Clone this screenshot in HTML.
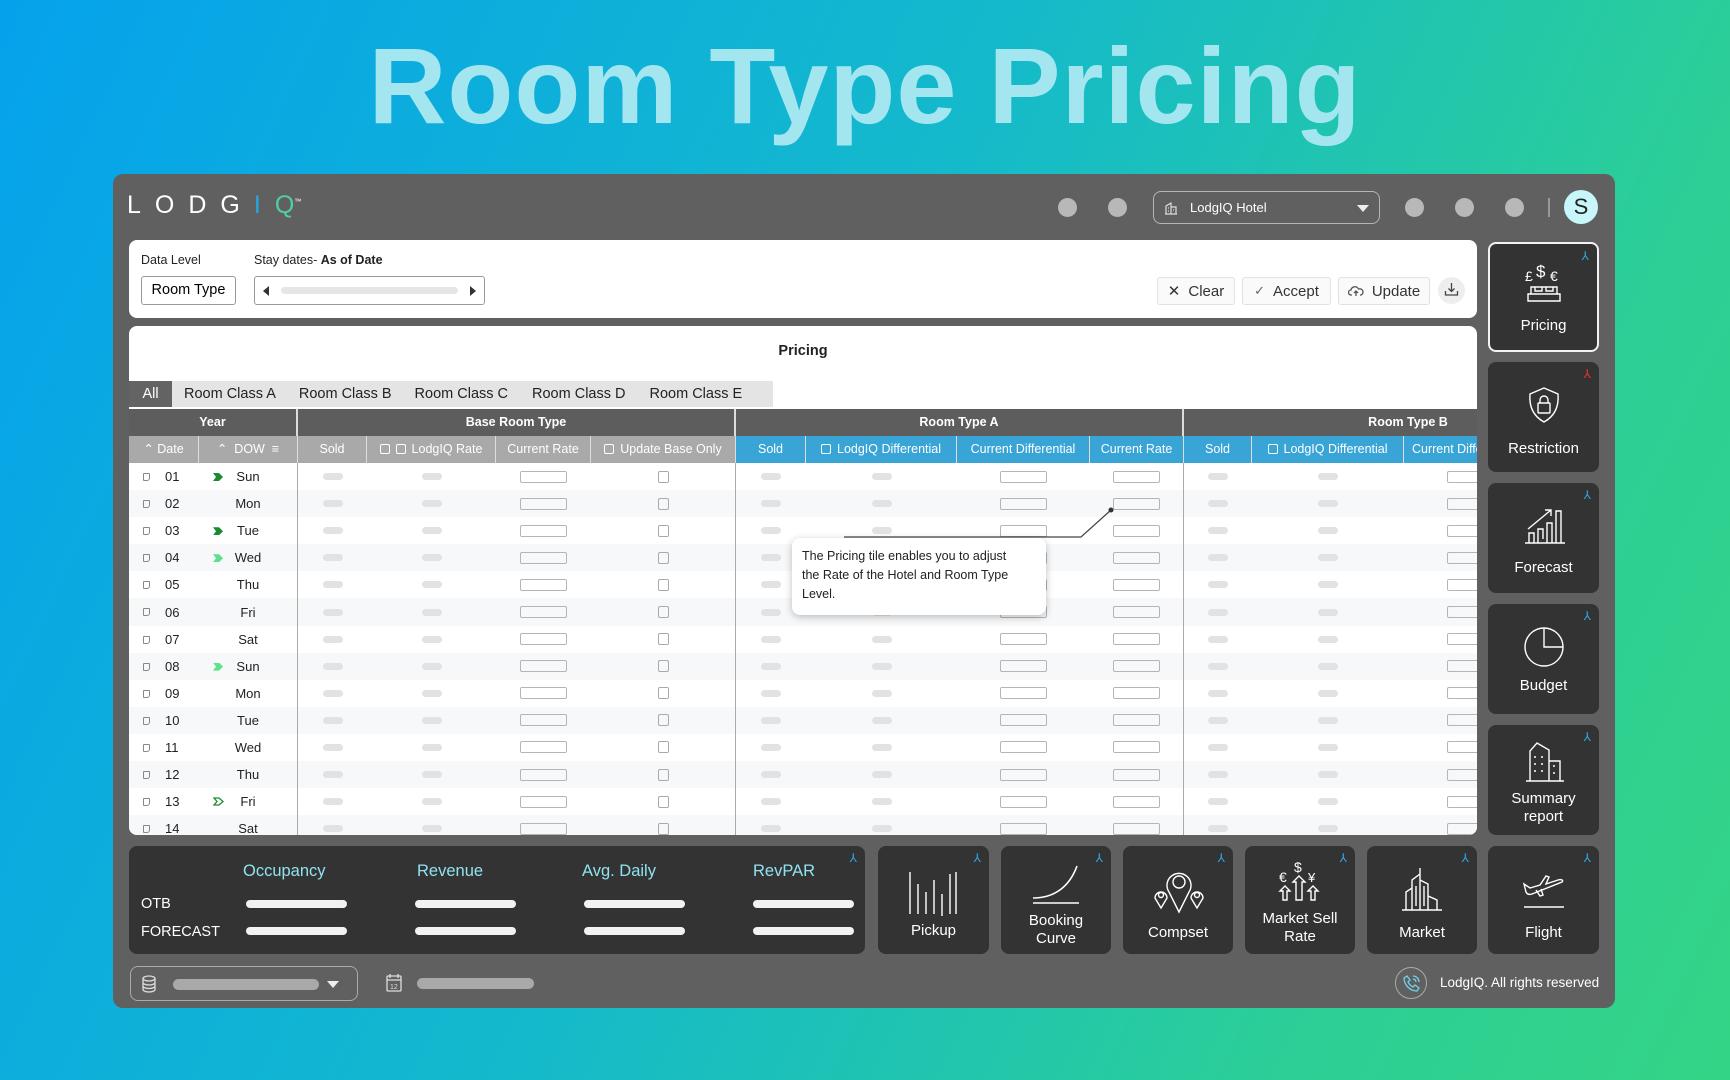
<!DOCTYPE html>
<html><head><meta charset="utf-8"><style>
*{box-sizing:border-box;margin:0;padding:0}
body{width:1730px;height:1080px;overflow:hidden;font-family:"Liberation Sans",sans-serif;background:linear-gradient(115deg,#05a2ec 0%,#14b9cc 45%,#2ccf96 80%,#34d486 100%);position:relative}
.abs{position:absolute}
h1{position:absolute;left:0;width:1730px;top:26px;text-align:center;font-size:108px;font-weight:bold;color:#a3e6f0;letter-spacing:1px;line-height:120px}
.panel{left:113px;top:174px;width:1502px;height:834px;background:#606060;border-radius:10px}
.logo{left:127px;top:191px;color:#fff;font-size:25px;letter-spacing:14px}
.dot{width:19px;height:19px;border-radius:50%;background:#b8b8b8;top:198px}
.card{background:#fff;border-radius:8px}
.lbl{font-size:12.5px;color:#222}
.box{border:1px solid #999;border-radius:3px;background:#fff}
.btn{top:277px;height:28px;border:1px solid #e2e2e2;border-radius:3px;background:#fafafa;font-size:15px;color:#333;display:flex;align-items:center;justify-content:center;gap:8px}
.tile{background:#333;border-radius:8px;color:#fff;font-size:15px;text-align:center}
.tile .t{position:absolute;left:0;right:0;line-height:18px}
.pin{position:absolute;right:8px;top:5px;color:#2fa8e0;font-size:12px}
.tabs{left:129px;top:381px;height:26px;display:flex;font-size:14.5px;color:#222}
.grp{left:129px;top:409px;width:1348px;height:27px;background:#5d5d5d;color:#fff;font-weight:bold;font-size:12.5px;overflow:hidden}
.grp div{position:absolute;top:0;height:27px;line-height:27px;text-align:center;border-right:2px solid #ddd}
.hdr{left:129px;top:436px;width:1348px;height:27px;display:flex;font-size:12.5px;color:#fff;overflow:hidden}
.hdr span{height:27px;line-height:27px;text-align:center;border-right:1.5px solid #ddd;white-space:nowrap;overflow:hidden;flex:none}
.gr{background:#a9a9a9}.bl{background:#38a5d6}
.cb{display:inline-block;width:10px;height:10px;border:1.3px solid #fff;border-radius:2px;vertical-align:-1px;margin-right:6px}
.body{left:129px;top:463px;width:1348px;height:372px;overflow:hidden;border-radius:0 0 8px 8px}
.r{height:27.1px;display:flex;align-items:center;font-size:13px;color:#222}
.r.a{background:#f6f8fa}
.r span{flex:none;height:27.1px;display:flex;align-items:center;justify-content:center;position:relative}
.w1{width:70px}.w2{width:99px}.w3{width:69px}.w4{width:129px}.w5{width:95px}.w6{width:145px}.w7{width:70px}.w8{width:151px}.w9{width:133px}.w10{width:94px}.w11{width:68px}.w12{width:152px}.w13{width:133px}
.r .w1{justify-content:flex-start;padding-left:36px}
.w2,.w6,.w10{border-right:1.5px solid #aaa}
.hdr .w2,.hdr .w6,.hdr .w10{border-right:1.5px solid #ddd}
.di{position:absolute;left:14px;top:10px;width:7px;height:8px;border:1.2px solid #888;border-radius:1px 1px 3px 1px}
.ch{position:absolute;left:14px;top:10px;width:10px;height:8px;clip-path:polygon(0 0,60% 0,100% 50%,60% 100%,0 100%,30% 50%)}
.g1{background:#1a8c2e}.g2{background:#5fe08a}
.p{display:block;width:20px;height:7px;border-radius:4px;background:#e2e2e2}
.x{display:block;width:47px;height:12px;border:1.3px solid #b5b5b5;border-radius:2px}
.k{display:block;width:11px;height:12px;border:1.3px solid #aaa;border-radius:2px}
.kh{color:#8fe3f0;font-size:16.5px;top:862px}
.kb{width:101px;height:8px;border-radius:4px;background:#f2f2f2}
</style></head><body>
<h1>Room Type Pricing</h1>
<div class="abs panel"></div>
<div class="abs logo">LODG<span style="color:#2aa7e0">I</span><span style="color:#4fcfa0;letter-spacing:0">Q</span><sup style="font-size:7px;letter-spacing:0">™</sup></div>
<div class="abs dot" style="left:1058px"></div><div class="abs dot" style="left:1108px"></div>
<div class="abs" style="left:1153px;top:191px;width:227px;height:33px;border:1.3px solid #b5b5b5;border-radius:8px;color:#fff;font-size:13px;line-height:31px;padding-left:36px">LodgIQ Hotel
<svg class="abs" style="left:10px;top:9px" width="14" height="14" viewBox="0 0 14 14" fill="none" stroke="#ddd" stroke-width="1.2"><path d="M2 13V5l5-3v11M7 6h5v7M1 13h12M4 7h1M4 10h1M9 9h1"/></svg>
<div class="abs" style="right:10px;top:13px;width:0;height:0;border-left:6px solid transparent;border-right:6px solid transparent;border-top:7px solid #eee"></div></div>
<div class="abs dot" style="left:1405px"></div><div class="abs dot" style="left:1455px"></div><div class="abs dot" style="left:1505px"></div>
<div class="abs" style="left:1548px;top:198px;width:1.5px;height:19px;background:#999"></div>
<div class="abs" style="left:1564px;top:190px;width:34px;height:34px;border-radius:50%;background:#c7f6fb;color:#222;font-size:22px;text-align:center;line-height:34px">S</div>

<div class="abs card" style="left:129px;top:240px;width:1348px;height:78px"></div>
<div class="abs lbl" style="left:141px;top:253px">Data Level</div>
<div class="abs lbl" style="left:254px;top:253px">Stay dates- <b>As of Date</b></div>
<div class="abs box" style="left:141px;top:276px;width:95px;height:29px;font-size:14.5px;line-height:27px;text-align:center">Room Type</div>
<div class="abs box" style="left:254px;top:276px;width:231px;height:29px">
<div class="abs" style="left:8px;top:9px;border-top:5px solid transparent;border-bottom:5px solid transparent;border-right:6px solid #333"></div>
<div class="abs" style="left:26px;top:10px;width:177px;height:7px;border-radius:4px;background:#e6e6e6"></div>
<div class="abs" style="right:8px;top:9px;border-top:5px solid transparent;border-bottom:5px solid transparent;border-left:6px solid #333"></div></div>
<div class="abs btn" style="left:1157px;width:78px"><span style="font-size:15px">✕</span>Clear</div>
<div class="abs btn" style="left:1242px;width:89px"><span style="font-size:13px;color:#666">✓</span>Accept</div>
<div class="abs btn" style="left:1338px;width:92px"><svg width="16" height="12" viewBox="0 0 16 12" fill="none" stroke="#555" stroke-width="1.3"><path d="M4 10H3a2.5 2.5 0 010-5 4 4 0 017.5-1A3 3 0 0113 10h-1M8 11V6M6 8l2-2 2 2"/></svg>Update</div>
<div class="abs" style="left:1438px;top:277px;width:27px;height:27px;border-radius:50%;background:#eee"><svg class="abs" style="left:6px;top:5px" width="15" height="15" viewBox="0 0 15 15" fill="none" stroke="#444" stroke-width="1.3"><path d="M7.5 1v8M4.5 6.5l3 3 3-3M1.5 9v4h12V9"/></svg></div>

<div class="abs card" style="left:129px;top:326px;width:1348px;height:509px"></div>
<div class="abs" style="left:129px;width:1348px;top:343px;text-align:center;font-weight:bold;font-size:14.5px;color:#222">Pricing</div>
<div class="abs tabs"><div style="background:#636363;color:#fff;width:43px;text-align:center;line-height:26px">All</div><div style="background:#e4e4e4;width:601px;line-height:26px;display:flex;gap:0"><span style="padding:0 12px">Room Class A</span><span style="padding:0 11px">Room Class B</span><span style="padding:0 12px">Room Class C</span><span style="padding:0 12px">Room Class D</span><span style="padding:0 12px">Room Class E</span></div></div>
<div class="abs grp"><div style="left:0;width:169px">Year</div><div style="left:169px;width:438px">Base Room Type</div><div style="left:607px;width:448px">Room Type A</div><div style="left:1055px;width:448px;border:none">Room Type B</div></div>
<div class="abs hdr">
<span class="w1 gr">⌃ Date</span><span class="w2 gr">⌃ &nbsp;DOW &nbsp;≡</span><span class="w3 gr">Sold</span><span class="w4 gr"><i class="cb"></i><i class="cb"></i>LodgIQ Rate</span><span class="w5 gr">Current Rate</span><span class="w6 gr"><i class="cb"></i>Update Base Only</span><span class="w7 bl">Sold</span><span class="w8 bl"><i class="cb"></i>LodgIQ Differential</span><span class="w9 bl">Current Differential</span><span class="w10 bl">Current Rate</span><span class="w11 bl">Sold</span><span class="w12 bl"><i class="cb"></i>LodgIQ Differential</span><span class="w13 bl" style="text-align:left;padding-left:8px">Current Differential</span></div>
<div class="abs body">
<div class="r"><span class="w1"><i class="di"></i>01</span><span class="w2"><i class="ch g1"></i>Sun</span><span class="w3"><b class="p"></b></span><span class="w4"><b class="p"></b></span><span class="w5"><b class="x"></b></span><span class="w6"><b class="k"></b></span><span class="w7"><b class="p"></b></span><span class="w8"><b class="p"></b></span><span class="w9"><b class="x"></b></span><span class="w10"><b class="x"></b></span><span class="w11"><b class="p"></b></span><span class="w12"><b class="p"></b></span><span class="w13"><b class="x"></b></span></div>
<div class="r a"><span class="w1"><i class="di"></i>02</span><span class="w2">Mon</span><span class="w3"><b class="p"></b></span><span class="w4"><b class="p"></b></span><span class="w5"><b class="x"></b></span><span class="w6"><b class="k"></b></span><span class="w7"><b class="p"></b></span><span class="w8"><b class="p"></b></span><span class="w9"><b class="x"></b></span><span class="w10"><b class="x"></b></span><span class="w11"><b class="p"></b></span><span class="w12"><b class="p"></b></span><span class="w13"><b class="x"></b></span></div>
<div class="r"><span class="w1"><i class="di"></i>03</span><span class="w2"><i class="ch g1"></i>Tue</span><span class="w3"><b class="p"></b></span><span class="w4"><b class="p"></b></span><span class="w5"><b class="x"></b></span><span class="w6"><b class="k"></b></span><span class="w7"><b class="p"></b></span><span class="w8"><b class="p"></b></span><span class="w9"><b class="x"></b></span><span class="w10"><b class="x"></b></span><span class="w11"><b class="p"></b></span><span class="w12"><b class="p"></b></span><span class="w13"><b class="x"></b></span></div>
<div class="r a"><span class="w1"><i class="di"></i>04</span><span class="w2"><i class="ch g2"></i>Wed</span><span class="w3"><b class="p"></b></span><span class="w4"><b class="p"></b></span><span class="w5"><b class="x"></b></span><span class="w6"><b class="k"></b></span><span class="w7"><b class="p"></b></span><span class="w8"><b class="p"></b></span><span class="w9"><b class="x"></b></span><span class="w10"><b class="x"></b></span><span class="w11"><b class="p"></b></span><span class="w12"><b class="p"></b></span><span class="w13"><b class="x"></b></span></div>
<div class="r"><span class="w1"><i class="di"></i>05</span><span class="w2">Thu</span><span class="w3"><b class="p"></b></span><span class="w4"><b class="p"></b></span><span class="w5"><b class="x"></b></span><span class="w6"><b class="k"></b></span><span class="w7"><b class="p"></b></span><span class="w8"><b class="p"></b></span><span class="w9"><b class="x"></b></span><span class="w10"><b class="x"></b></span><span class="w11"><b class="p"></b></span><span class="w12"><b class="p"></b></span><span class="w13"><b class="x"></b></span></div>
<div class="r a"><span class="w1"><i class="di"></i>06</span><span class="w2">Fri</span><span class="w3"><b class="p"></b></span><span class="w4"><b class="p"></b></span><span class="w5"><b class="x"></b></span><span class="w6"><b class="k"></b></span><span class="w7"><b class="p"></b></span><span class="w8"><b class="p"></b></span><span class="w9"><b class="x"></b></span><span class="w10"><b class="x"></b></span><span class="w11"><b class="p"></b></span><span class="w12"><b class="p"></b></span><span class="w13"><b class="x"></b></span></div>
<div class="r"><span class="w1"><i class="di"></i>07</span><span class="w2">Sat</span><span class="w3"><b class="p"></b></span><span class="w4"><b class="p"></b></span><span class="w5"><b class="x"></b></span><span class="w6"><b class="k"></b></span><span class="w7"><b class="p"></b></span><span class="w8"><b class="p"></b></span><span class="w9"><b class="x"></b></span><span class="w10"><b class="x"></b></span><span class="w11"><b class="p"></b></span><span class="w12"><b class="p"></b></span><span class="w13"><b class="x"></b></span></div>
<div class="r a"><span class="w1"><i class="di"></i>08</span><span class="w2"><i class="ch g2"></i>Sun</span><span class="w3"><b class="p"></b></span><span class="w4"><b class="p"></b></span><span class="w5"><b class="x"></b></span><span class="w6"><b class="k"></b></span><span class="w7"><b class="p"></b></span><span class="w8"><b class="p"></b></span><span class="w9"><b class="x"></b></span><span class="w10"><b class="x"></b></span><span class="w11"><b class="p"></b></span><span class="w12"><b class="p"></b></span><span class="w13"><b class="x"></b></span></div>
<div class="r"><span class="w1"><i class="di"></i>09</span><span class="w2">Mon</span><span class="w3"><b class="p"></b></span><span class="w4"><b class="p"></b></span><span class="w5"><b class="x"></b></span><span class="w6"><b class="k"></b></span><span class="w7"><b class="p"></b></span><span class="w8"><b class="p"></b></span><span class="w9"><b class="x"></b></span><span class="w10"><b class="x"></b></span><span class="w11"><b class="p"></b></span><span class="w12"><b class="p"></b></span><span class="w13"><b class="x"></b></span></div>
<div class="r a"><span class="w1"><i class="di"></i>10</span><span class="w2">Tue</span><span class="w3"><b class="p"></b></span><span class="w4"><b class="p"></b></span><span class="w5"><b class="x"></b></span><span class="w6"><b class="k"></b></span><span class="w7"><b class="p"></b></span><span class="w8"><b class="p"></b></span><span class="w9"><b class="x"></b></span><span class="w10"><b class="x"></b></span><span class="w11"><b class="p"></b></span><span class="w12"><b class="p"></b></span><span class="w13"><b class="x"></b></span></div>
<div class="r"><span class="w1"><i class="di"></i>11</span><span class="w2">Wed</span><span class="w3"><b class="p"></b></span><span class="w4"><b class="p"></b></span><span class="w5"><b class="x"></b></span><span class="w6"><b class="k"></b></span><span class="w7"><b class="p"></b></span><span class="w8"><b class="p"></b></span><span class="w9"><b class="x"></b></span><span class="w10"><b class="x"></b></span><span class="w11"><b class="p"></b></span><span class="w12"><b class="p"></b></span><span class="w13"><b class="x"></b></span></div>
<div class="r a"><span class="w1"><i class="di"></i>12</span><span class="w2">Thu</span><span class="w3"><b class="p"></b></span><span class="w4"><b class="p"></b></span><span class="w5"><b class="x"></b></span><span class="w6"><b class="k"></b></span><span class="w7"><b class="p"></b></span><span class="w8"><b class="p"></b></span><span class="w9"><b class="x"></b></span><span class="w10"><b class="x"></b></span><span class="w11"><b class="p"></b></span><span class="w12"><b class="p"></b></span><span class="w13"><b class="x"></b></span></div>
<div class="r"><span class="w1"><i class="di"></i>13</span><span class="w2"><svg class="abs" style="left:14px;top:9px" width="11" height="9" viewBox="0 0 11 9" fill="none" stroke="#1a8c2e" stroke-width="1.3"><path d="M1 1h5l4 3.5L6 8H1l3-3.5z"/></svg>Fri</span><span class="w3"><b class="p"></b></span><span class="w4"><b class="p"></b></span><span class="w5"><b class="x"></b></span><span class="w6"><b class="k"></b></span><span class="w7"><b class="p"></b></span><span class="w8"><b class="p"></b></span><span class="w9"><b class="x"></b></span><span class="w10"><b class="x"></b></span><span class="w11"><b class="p"></b></span><span class="w12"><b class="p"></b></span><span class="w13"><b class="x"></b></span></div>
<div class="r a"><span class="w1"><i class="di"></i>14</span><span class="w2">Sat</span><span class="w3"><b class="p"></b></span><span class="w4"><b class="p"></b></span><span class="w5"><b class="x"></b></span><span class="w6"><b class="k"></b></span><span class="w7"><b class="p"></b></span><span class="w8"><b class="p"></b></span><span class="w9"><b class="x"></b></span><span class="w10"><b class="x"></b></span><span class="w11"><b class="p"></b></span><span class="w12"><b class="p"></b></span><span class="w13"><b class="x"></b></span></div>
</div>
<svg class="abs" style="left:0;top:0" width="1730" height="1080" pointer-events="none"><path d="M844 537H1081L1111 510" fill="none" stroke="#444" stroke-width="1.2"/><circle cx="1111" cy="510" r="2.5" fill="#333"/></svg>
<div class="abs" style="left:792px;top:538px;width:254px;height:77px;background:#fff;border-radius:8px;box-shadow:0 2px 8px rgba(0,0,0,.25);font-size:12.5px;line-height:19px;color:#222;padding:9px 10px;white-space:nowrap">The Pricing tile enables you to adjust<br>the Rate of the Hotel and Room Type<br>Level.</div>

<!-- right tiles -->
<div class="abs tile" style="left:1488px;top:242px;width:111px;height:110px;border:2px solid #f2f2f2"><span class="pin">⅄</span>
<svg class="abs" style="left:33px;top:20px" width="42" height="42" viewBox="0 0 42 42" fill="none" stroke="#fff" stroke-width="1.4"><text x="2" y="17" fill="#fff" stroke="none" font-size="14" font-family="Liberation Sans">£</text><text x="13" y="13" fill="#fff" stroke="none" font-size="17" font-family="Liberation Sans">$</text><text x="27" y="17" fill="#fff" stroke="none" font-size="14" font-family="Liberation Sans">€</text><path d="M8 30V23h26v7M5 30h32v7H5zM12 23v4h7v-4M23 23v4h7v-4"/></svg>
<div class="t" style="top:73px">Pricing</div></div>
<div class="abs tile" style="left:1488px;top:362px;width:111px;height:110px"><span class="pin" style="color:#e33">⅄</span>
<svg class="abs" style="left:38px;top:24px" width="36" height="40" viewBox="0 0 36 40" fill="none" stroke="#fff" stroke-width="1.4"><path d="M18 2l14 6c1 12-3 22-14 28C7 30 3 20 4 8z"/><rect x="12" y="17" width="12" height="10" rx="1"/><path d="M14 17v-3a4 4 0 018 0v3"/></svg>
<div class="t" style="top:78px">Restriction</div></div>
<div class="abs tile" style="left:1488px;top:483px;width:111px;height:110px"><span class="pin">⅄</span>
<svg class="abs" style="left:36px;top:22px" width="42" height="40" viewBox="0 0 42 40" fill="none" stroke="#fff" stroke-width="1.4"><path d="M1 38h40M5 38V28h5v10M14 38V24h5v10M23 38V18h5v20M32 38V6h5v32M4 24L27 5M21 5h6v6"/></svg>
<div class="t" style="top:76px">Forecast</div></div>
<div class="abs tile" style="left:1488px;top:604px;width:111px;height:110px"><span class="pin">⅄</span>
<svg class="abs" style="left:35px;top:22px" width="42" height="42" viewBox="0 0 42 42" fill="none" stroke="#fff" stroke-width="1.4"><circle cx="21" cy="21" r="19"/><path d="M21 2v19h19"/></svg>
<div class="t" style="top:73px">Budget</div></div>
<div class="abs tile" style="left:1488px;top:725px;width:111px;height:110px"><span class="pin">⅄</span>
<svg class="abs" style="left:37px;top:16px" width="40" height="42" viewBox="0 0 40 42" fill="none" stroke="#fff" stroke-width="1.4"><path d="M1 40h38M5 40V10l7-8 12 7v31M24 20h11v20M9 16h2M16 16h2M9 23h2M16 23h2M9 30h2M16 30h2M28 25h2M28 32h2"/></svg>
<div class="t" style="top:65px">Summary<br>report</div></div>
<div class="abs tile" style="left:1488px;top:846px;width:111px;height:108px"><span class="pin">⅄</span>
<svg class="abs" style="left:32px;top:24px" width="48" height="40" viewBox="0 0 48 40" fill="none" stroke="#fff" stroke-width="1.4"><path d="M4 14l6 4 10-3 6-9 3 1-3 7 12-4c3-1 6 0 4 2L12 24c-3 1-5 0-6-2zM16 20l4 6 3-1-2-6M4 37h40"/></svg>
<div class="t" style="top:78px">Flight</div></div>

<!-- KPI -->
<div class="abs tile" style="left:129px;top:846px;width:736px;height:108px"><span class="pin">⅄</span></div>
<div class="abs kh" style="left:243px">Occupancy</div><div class="abs kh" style="left:417px">Revenue</div><div class="abs kh" style="left:582px">Avg. Daily</div><div class="abs kh" style="left:753px">RevPAR</div>
<div class="abs" style="left:141px;top:896px;color:#fff;font-size:14.5px">OTB</div>
<div class="abs" style="left:141px;top:924px;color:#fff;font-size:14.5px">FORECAST</div>
<div class="abs kb" style="left:246px;top:900px"></div><div class="abs kb" style="left:415px;top:900px"></div><div class="abs kb" style="left:584px;top:900px"></div><div class="abs kb" style="left:753px;top:900px"></div>
<div class="abs kb" style="left:246px;top:927px"></div><div class="abs kb" style="left:415px;top:927px"></div><div class="abs kb" style="left:584px;top:927px"></div><div class="abs kb" style="left:753px;top:927px"></div>

<!-- bottom tiles -->
<div class="abs tile" style="left:878px;top:846px;width:111px;height:108px"><span class="pin">⅄</span>
<svg class="abs" style="left:30px;top:24px" width="50" height="46" viewBox="0 0 50 46" fill="none" stroke="#fff" stroke-width="1.4"><path d="M2 2v42M10 14v30M18 22v22M26 10v34M34 24v22M42 4v40M48 2v42"/></svg>
<div class="t" style="top:76px">Pickup</div></div>
<div class="abs tile" style="left:1001px;top:846px;width:110px;height:108px"><span class="pin">⅄</span>
<svg class="abs" style="left:30px;top:18px" width="50" height="42" viewBox="0 0 50 42" fill="none" stroke="#fff" stroke-width="1.6"><path d="M2 34c20 0 36-10 44-32M2 39h46"/></svg>
<div class="t" style="top:66px">Booking<br>Curve</div></div>
<div class="abs tile" style="left:1123px;top:846px;width:110px;height:108px"><span class="pin">⅄</span>
<svg class="abs" style="left:30px;top:22px" width="52" height="46" viewBox="0 0 52 46" fill="none" stroke="#fff" stroke-width="1.4"><path d="M26 44L16 24a12 12 0 1120 0z"/><circle cx="26" cy="14" r="6"/><path d="M8 40l-6-10a6 6 0 1112 0zM44 40l-6-10a6 6 0 1112 0z"/><circle cx="8" cy="27" r="2.5"/><circle cx="44" cy="27" r="2.5"/></svg>
<div class="t" style="top:78px">Compset</div></div>
<div class="abs tile" style="left:1245px;top:846px;width:110px;height:108px"><span class="pin">⅄</span>
<svg class="abs" style="left:32px;top:12px" width="46" height="46" viewBox="0 0 46 46" fill="none" stroke="#fff" stroke-width="1.4"><text x="2" y="24" fill="#fff" stroke="none" font-size="14" font-family="Liberation Sans">€</text><text x="17" y="14" fill="#fff" stroke="none" font-size="14" font-family="Liberation Sans">$</text><text x="31" y="24" fill="#fff" stroke="none" font-size="13" font-family="Liberation Sans">¥</text><path d="M6 42V33H3l5-5 5 5h-3v9zM19 42V24h-3l6-6 6 6h-3v18zM34 42V33h-3l5-5 5 5h-3v9z"/></svg>
<div class="t" style="top:64px">Market Sell<br>Rate</div></div>
<div class="abs tile" style="left:1367px;top:846px;width:110px;height:108px"><span class="pin">⅄</span>
<svg class="abs" style="left:34px;top:20px" width="42" height="46" viewBox="0 0 42 46" fill="none" stroke="#fff" stroke-width="1.4"><path d="M1 44h40M5 44V26l6-4v22M11 44V14l8-6v36M19 10V2M19 44V14l8 4v26M27 44V30l9 4v10M15 20v20M23 20v20"/></svg>
<div class="t" style="top:78px">Market</div></div>

<!-- footer -->
<div class="abs" style="left:130px;top:966px;width:228px;height:35px;border:1.3px solid #aaa;border-radius:8px">
<svg class="abs" style="left:10px;top:8px" width="16" height="18" viewBox="0 0 16 18" fill="none" stroke="#ddd" stroke-width="1.3"><ellipse cx="8" cy="3.5" rx="6" ry="2.5"/><path d="M2 3.5v11c0 1.4 2.7 2.5 6 2.5s6-1.1 6-2.5v-11M2 7.5c0 1.4 2.7 2.5 6 2.5s6-1.1 6-2.5M2 11c0 1.4 2.7 2.5 6 2.5s6-1.1 6-2.5"/></svg>
<div class="abs" style="left:42px;top:12px;width:146px;height:11px;border-radius:6px;background:#a9a9a9"></div>
<div class="abs" style="left:196px;top:14px;border-left:6px solid transparent;border-right:6px solid transparent;border-top:7px solid #eee"></div></div>
<svg class="abs" style="left:386px;top:973px" width="16" height="19" viewBox="0 0 16 19" fill="none" stroke="#ddd" stroke-width="1.3"><rect x="1" y="3" width="14" height="15" rx="1"/><path d="M1 7h14M4 1v4M12 1v4"/><text x="4" y="16" fill="#ddd" stroke="none" font-size="7" font-family="Liberation Sans">12</text></svg>
<div class="abs" style="left:417px;top:978px;width:117px;height:11px;border-radius:6px;background:#a9a9a9"></div>
<div class="abs" style="left:1395px;top:967px;width:32px;height:32px;border-radius:50%;border:1.3px solid #aaa"><svg class="abs" style="left:7px;top:7px" width="17" height="17" viewBox="0 0 17 17" fill="none" stroke="#6fd3ee" stroke-width="1.3"><path d="M4 1l3 4-2 2c1 2 3 4 5 5l2-2 4 3-2 3C7 16 1 10 1 3z M10 1a6 6 0 016 6M10 4a3 3 0 013 3"/></svg></div>
<div class="abs" style="left:1440px;top:975px;color:#fff;font-size:13.5px">LodgIQ. All rights reserved</div>
</body></html>
